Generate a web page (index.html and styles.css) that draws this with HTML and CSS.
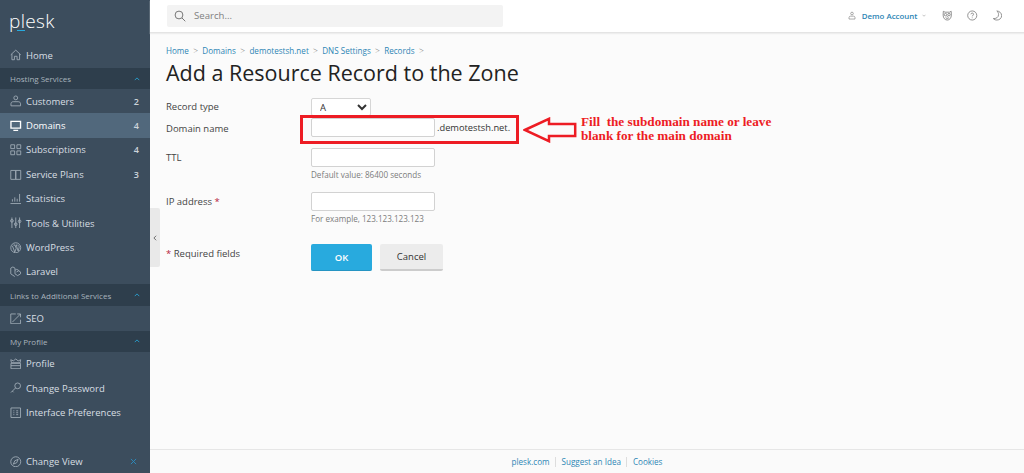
FILE: index.html
```html
<!DOCTYPE html>
<html lang="en">
<head>
<meta charset="utf-8">
<title>Add a Resource Record to the Zone</title>
<link rel="stylesheet" href="styles.css">
</head>
<body>
<div class="app">
  <aside class="sidebar">
    <div class="logo"><span class="logo-text">plesk</span></div>
    <a class="nav-item home"><svg class="ico" viewBox="0 0 12 12"><path d="M.8 6 6 1.200 11.200 6M2 5.200v6h2.600V7.600h2.800v3.600H10v-6"/></svg><span class="nav-label">Home</span></a>
    <div class="group"><span>Hosting Services</span><svg class="chev" viewBox="0 0 8 5"><path d="M1 4 4 1l3 3"/></svg></div>
    <a class="nav-item"><svg class="ico" viewBox="0 0 12 12"><circle cx="6" cy="3" r="2"/><path d="M1 11.300V9.200C1 7.800 2 7 3.400 7h5.200C10 7 11 7.800 11 9.200v2.100z"/></svg><span class="nav-label">Customers</span><b class="count">2</b></a>
    <a class="nav-item active"><svg class="ico solid" viewBox="0 0 12 12"><path d="M1 1.500h10v7H1zM3.500 10.800h5"/></svg><span class="nav-label">Domains</span><b class="count">4</b></a>
    <a class="nav-item"><svg class="ico" viewBox="0 0 12 12"><path d="M.8.800h4v4h-4zM7.200.800h4v4h-4zM.8 7.200h4v4h-4zM7.200 7.200h4v4h-4z"/></svg><span class="nav-label">Subscriptions</span><b class="count">4</b></a>
    <a class="nav-item"><svg class="ico" viewBox="0 0 12 12"><path d="M.8 1.500H6v9.300H.8zM6 1.500h5.200v9.300H6z"/></svg><span class="nav-label">Service Plans</span><b class="count">3</b></a>
    <a class="nav-item"><svg class="ico" viewBox="0 0 12 12"><path d="M.5 11h11M2.500 9V6.500M5 9V4.500M7.500 9V6M10 9V1"/></svg><span class="nav-label">Statistics</span></a>
    <a class="nav-item"><svg class="ico" viewBox="0 0 12 12"><path d="M2 .5v11M6 .5v11M10 .5v11"/><circle cx="2" cy="4" r="1.400"/><circle cx="6" cy="7.500" r="1.400"/><circle cx="10" cy="4.500" r="1.400"/></svg><span class="nav-label">Tools &amp; Utilities</span></a>
    <a class="nav-item"><svg class="ico" viewBox="0 0 12 12"><circle cx="6" cy="6" r="5.200"/><path d="M2.500 4 5 10.500l1.500-4L5 3M5.500 3.200h-2M8 3.200H6.200M6.500 3.200l2 6.300 1-3.500c.3-1-.2-1.800-.6-2.500"/></svg><span class="nav-label">WordPress</span></a>
    <a class="nav-item"><svg class="ico" viewBox="0 0 12 12"><path d="M.8 2.200 3 1l2.200 1.200v6L8 10l3-1.800V6.200L9 5 6.800 6.200M5.200 4.500 7 3.500 9 4.500V5M.8 2.200v6L5 11"/></svg><span class="nav-label">Laravel</span></a>
    <div class="group links"><span>Links to Additional Services</span><svg class="chev" viewBox="0 0 8 5"><path d="M1 4 4 1l3 3"/></svg></div>
    <a class="nav-item"><svg class="ico" viewBox="0 0 12 12"><path d="M6 1H.8v10.200H11V7M5 7l6-6M7.500 1H11v3.500M2.500 9.500 5 7"/></svg><span class="nav-label">SEO</span></a>
    <div class="group"><span>My Profile</span><svg class="chev" viewBox="0 0 8 5"><path d="M1 4 4 1l3 3"/></svg></div>
    <a class="nav-item"><svg class="ico" viewBox="0 0 12 12"><path d="M1.500 5 .8 1.800 3.500 3 6 1l2.500 2 2.700-1.200L10.500 5zM1 5.500h10v5.700H1zM1 8h10"/></svg><span class="nav-label">Profile</span></a>
    <a class="nav-item"><svg class="ico" viewBox="0 0 12 12"><circle cx="8" cy="4" r="3"/><path d="M5.800 6.200 1 11M2.500 9.500l1.200 1.200"/></svg><span class="nav-label">Change Password</span></a>
    <a class="nav-item"><svg class="ico" viewBox="0 0 12 12"><path d="M1 1h10v10H1zM3.500 4h1M3.500 6h1M3.500 8h1M6.500 4h2M6.500 6h2M6.500 8h2"/></svg><span class="nav-label">Interface Preferences</span></a>
    <a class="nav-item change-view"><svg class="ico" viewBox="0 0 12 12"><circle cx="6" cy="6" r="5.200"/><path d="M8.500 3.500 7 7 3.500 8.500 5 5z"/></svg><span class="nav-label">Change View</span><svg class="close-x" viewBox="0 0 8 8"><path d="m1 1 6 6M7 1 1 7"/></svg></a>
  </aside>

  <div class="main">
    <header class="topbar">
      <div class="search"><svg class="search-ico" viewBox="0 0 12 12"><circle cx="5" cy="5" r="3.900"/><path d="m8 8 3.300 3.300"/></svg><span>Search...</span></div>
      <div class="top-actions">
        <a class="account"><svg class="top-ico small" viewBox="0 0 12 12"><circle cx="6" cy="3" r="2"/><path d="M1.500 11.300V9.200C1.500 7.800 2.500 7 3.800 7h4.400c1.300 0 2.300.8 2.300 2.200v2.100z"/></svg><span>Demo Account</span><svg class="caret" viewBox="0 0 8 5"><path d="m1 1 3 3 3-3"/></svg></a>
        <svg class="top-ico owl" viewBox="0 0 12 12"><path d="M1.500 1.200 3.500 2.200h5l2-1 .2 4.300C10.700 9 8.500 11.200 6 11.200S1.300 9 1.300 5.500z"/><circle cx="4" cy="5" r="1.400"/><circle cx="8" cy="5" r="1.400"/><path d="M6 6.500v1.500M4 8.500l2 1 2-1"/></svg>
        <svg class="top-ico help" viewBox="0 0 12 12"><circle cx="6" cy="6" r="5.200"/><path d="M4.500 4.600C4.500 3.700 5.200 3.200 6 3.200s1.500.5 1.500 1.400S6 5.900 6 7M6 8.300v.8"/></svg>
        <svg class="top-ico moon" viewBox="0 0 12 12"><path d="M5.500.8c3 .2 5.500 2.400 5.500 5.400 0 3-2.500 5-5.500 5-1.500 0-3-.5-4-1.700 3 .3 6-1.300 6-4.500C7.500 3.200 6.800 1.800 5.500.8z"/></svg>
      </div>
    </header>

    <main class="content">
      <nav class="crumbs">
        <a>Home</a><i>&gt;</i><a>Domains</a><i>&gt;</i><a>demotestsh.net</a><i>&gt;</i><a>DNS Settings</a><i>&gt;</i><a>Records</a><i>&gt;</i>
      </nav>
      <h1>Add a Resource Record to the Zone</h1>
      <form class="form">
        <label class="lbl row-type">Record type</label>
        <div class="ctl row-type"><select class="select"><option>A</option></select></div>
        <label class="lbl row-name">Domain name</label>
        <div class="ctl row-name"><input class="input" type="text"><span class="suffix">.demotestsh.net.</span></div>
        <label class="lbl row-ttl">TTL</label>
        <div class="ctl row-ttl"><input class="input" type="text"><p class="hint">Default value: 86400 seconds</p></div>
        <label class="lbl row-ip">IP address <em>*</em></label>
        <div class="ctl row-ip"><input class="input" type="text"><p class="hint">For example, 123.123.123.123</p></div>
        <div class="lbl row-btn"><em>*</em> Required fields</div>
        <div class="ctl row-btn buttons"><button class="btn ok" type="button">OK</button><button class="btn cancel" type="button">Cancel</button></div>
      </form>
      <div class="handle"><svg viewBox="0 0 5 8"><path d="M4 1 1 4l3 3"/></svg></div>
      <div class="callout-box"></div>
      <svg class="callout-arrow" viewBox="0 0 54 26"><path d="M1.800 13 26 1.800V7h26.200v12H26v5.200z"/></svg>
      <p class="callout-note">Fill&nbsp; the subdomain name or leave<br>blank for the main domain</p>
    </main>

    <footer class="footer"><a>plesk.com</a><a>Suggest an Idea</a><a>Cookies</a></footer>
  </div>
</div>
</body>
</html>
```
FILE: styles.css
```css
* { box-sizing: border-box; }
html, body { margin: 0; height: 100%; overflow: hidden; }
body { font-family: "Open Sans", "Noto Sans", sans-serif; font-size: 9.500px; color: #333; }
.app { display: flex; height: 473px; }

.sidebar { width: 150px; flex: none; display: flex; flex-direction: column; background: #3c4d5d; color: #d8dee3; }
.logo { height: 42px; padding: 8px 0 0 9px; }
.logo-text { font-size: 19px; font-weight: 300; letter-spacing: .35px; color: #fff; line-height: 26px; display: inline-block; position: relative; }
.logo-text::after { content: ""; position: absolute; left: 8px; top: 21.500px; width: 8px; height: 1.500px; background: #28aade; }
.nav-item { display: flex; align-items: center; height: 24.400px; padding: 0 11px 0 10px; flex: none; }
.nav-item.home { height: 26px; }
.nav-item.active { background: #51687c; color: #fff; }
.nav-label { flex: 1; margin-left: 4.500px; white-space: nowrap; }
.count { font-weight: 600; font-size: 9px; color: #ccd4da; }
.ico { width: 11.500px; height: 11.500px; flex: none; fill: none; stroke: #a3afb9; stroke-width: .9; }
.ico.solid { stroke: #fff; stroke-width: 1.400; }
.group { display: flex; align-items: center; justify-content: space-between; height: 21px; padding: 0 10px; flex: none; background: #2e3e4c; color: #a9b4bd; font-size: 8px; }
.group.links { height: 22px; }
.chev { width: 6px; height: 4px; fill: none; stroke: #28aade; stroke-width: 1.100; }
.change-view { margin-top: auto; height: 23px; }
.close-x { width: 7px; height: 7px; fill: none; stroke: #2a8fc4; stroke-width: 1; margin-right: 2px; }

.main { flex: 1; min-width: 0; display: flex; flex-direction: column; background: #fbfbfb; }
.topbar { height: 33px; flex: none; display: flex; align-items: center; justify-content: space-between; padding: 0 22px 1px 17px; background: #fff; border-bottom: 1px solid #e4e4e4; box-shadow: 0 1px 1px #eee; }
.search { width: 336px; height: 22px; display: flex; align-items: center; gap: 8px; padding-left: 7px; background: #f3f3f3; border-radius: 2px; color: #7f7f7f; font-size: 9.600px; }
.search-ico { width: 12px; height: 12px; fill: none; stroke: #777; stroke-width: 1; }
.top-actions { display: flex; align-items: center; }
.account { display: flex; align-items: center; color: #2e86b5; font-size: 7.900px; font-weight: 600; }
.account span { margin-left: 6px; }
.caret { width: 4px; height: 3px; margin-left: 4px; fill: none; stroke: #888; stroke-width: 1; }
.top-ico { width: 10.500px; height: 11px; fill: none; stroke: #777; stroke-width: .9; }
.top-ico.small { width: 8px; height: 9px; }
.owl { margin-left: 16.500px; }
.help { margin-left: 14.500px; }
.moon { margin-left: 14px; }

.content { flex: 1; position: relative; padding: 10px 16px 0; }
.crumbs { display: flex; align-items: center; height: 14px; font-size: 8.100px; color: #2e86b5; }
.crumbs i { font-style: normal; font-size: 8.500px; font-weight: 300; color: #777; margin: 0 4.300px; }
h1 { margin: 0; font-size: 21.500px; font-weight: 400; line-height: 31px; color: #222; white-space: nowrap; }
.form { display: grid; grid-template-columns: 145px 1fr; grid-template-rows: 20px 23px 44px 59px auto; margin-top: 10px; }
.lbl { line-height: 14px; padding-top: 2px; color: #444; }
.lbl em { font-style: normal; color: #b5213c; }
.lbl.row-name { padding-top: 4px; }
.lbl.row-ttl, .lbl.row-ip { padding-top: 10px; }
.lbl.row-btn { padding-top: 3px; }
.ctl { display: flex; flex-wrap: wrap; align-content: flex-start; align-items: center; }
.row-ttl.ctl, .row-ip.ctl { padding-top: 7px; }
.select { width: 60px; height: 18px; background: #fff; border: 1px solid #d6d6d6; border-radius: 2px; font: inherit; color: #333; padding: 0 0 0 4px; }
.input { width: 124px; height: 19px; background: #fff; border: 1px solid #d2d2d2; border-radius: 2px; padding: 0; }
.suffix { margin-left: 2px; font-size: 9.300px; }
.hint { flex-basis: 100%; margin: 2px 0 0; font-size: 8.100px; line-height: 12px; color: #7c7c7c; }
.buttons { gap: 8px; }
.btn { height: 27px; border: 0; border-radius: 2px; font: inherit; padding: 0; }
.ok { width: 61px; background: #28aade; color: #fff; font-weight: 600; border-bottom: 1px solid #2594c2; }
.cancel { width: 63px; background: #ececec; color: #333; border-bottom: 2px solid #ccc; }

.handle { position: absolute; left: 0; top: 175px; width: 10px; height: 59px; background: #e9e9e9; border-radius: 0 2px 2px 0; display: flex; align-items: center; justify-content: center; }
.handle svg { width: 4px; height: 6px; fill: none; stroke: #444; stroke-width: 1; }
.callout-box { position: absolute; left: 150px; top: 82px; width: 219px; height: 29px; border: 3px solid #ed1c24; }
.callout-arrow { position: absolute; left: 373px; top: 84px; width: 54px; height: 26px; fill: none; stroke: #ed1c24; stroke-width: 2.500; }
.callout-note { position: absolute; left: 431px; top: 82px; margin: 0; font-family: "Liberation Serif", serif; font-weight: 700; font-size: 13.200px; line-height: 14px; color: #ed1c24; white-space: nowrap; }

.footer { height: 24px; flex: none; display: flex; align-items: center; justify-content: center; background: #fafafa; border-top: 1px solid #e6e6e6; font-size: 8.100px; color: #2e86b5; }
.footer a { padding: 0 5.500px; line-height: 10px; }
.footer a + a { border-left: 1px solid #ddd; }
```
